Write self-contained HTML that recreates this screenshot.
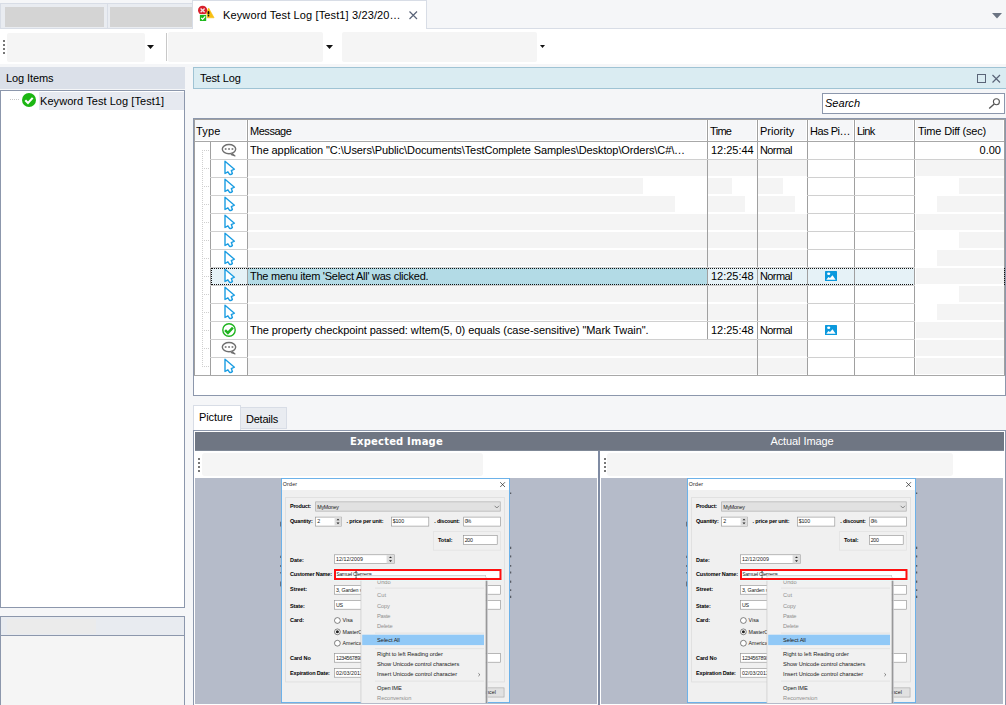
<!DOCTYPE html><html><head><meta charset="utf-8"><title>Keyword Test Log</title><style>
*{box-sizing:border-box;margin:0;padding:0}
html,body{width:1006px;height:705px;overflow:hidden;background:#f5f6f8;font-family:"Liberation Sans",sans-serif;font-size:11px;color:#000}
.a{position:absolute}
.t{position:absolute;white-space:pre;line-height:14px;height:14px}
.blur{position:absolute;background:#f5f5f5;border-radius:2px}
.dt{font-family:"Liberation Sans",sans-serif;fill:#1a1a1a;white-space:pre}
.dt.b{font-weight:bold;fill:#000}
.dt.g{fill:#8f8f8f}
.dlg{position:absolute;overflow:hidden}
.dlg .a{position:absolute}
svg{position:absolute;overflow:visible}
</style></head><body>
<div class="a" style="left:0px;top:3px;width:108px;height:26px;background:#e9ecf1;border:1px solid #d8dde6;"></div>
<div class="a" style="left:108px;top:3px;width:85px;height:26px;background:#e9ecf1;border:1px solid #d8dde6;border-left:none;"></div>
<div class="a" style="left:5px;top:7px;width:99px;height:20px;background:#d4d4d4;"></div>
<div class="a" style="left:110px;top:7px;width:82px;height:20px;background:#d4d4d4;"></div>
<div class="a" style="left:0px;top:28px;width:1006px;height:1px;background:#d8dde6;"></div>
<div class="a" style="left:192px;top:0px;width:235px;height:29px;background:#ffffff;border:1px solid #d8dde6;border-bottom:none;"></div>
<div class="t" style="left:223px;top:8px;"><span id="f0" style="letter-spacing:0.129px">Keyword Test Log [Test1] 3/23/20…</span></div>
<svg style="left:197px;top:4px" width="18" height="19" viewBox="0 0 18 19">
<path d="M11.6 4 L17.1 13.8 L7.4 13.8 Z" fill="#f8c012" stroke="#f8c012" stroke-width="0.6" stroke-linejoin="round"/>
<rect x="10.6" y="7.1" width="1.8" height="3.4" rx="0.8" fill="#111"/><rect x="10.6" y="10.9" width="1.8" height="1.6" rx="0.8" fill="#111"/>
<circle cx="5.6" cy="6.3" r="4.6" fill="#d8202c"/>
<path d="M3.6 4.4 L7.6 8.2 M7.6 4.4 L3.6 8.2" stroke="#f3dfe0" stroke-width="1.4"/>
<rect x="2.2" y="10.1" width="7.6" height="7.6" fill="#fff"/>
<rect x="2.9" y="10.9" width="6.3" height="6.1" fill="#1db81d"/>
<path d="M4.2 13.9 L5.6 15.4 L8.2 12.4" stroke="#fff" stroke-width="1.2" fill="none"/>
</svg>
<svg style="left:409px;top:11px" width="9" height="9" viewBox="0 0 9 9"><path d="M0.5 0.5 L8 8 M8 0.5 L0.5 8" stroke="#5a6478" stroke-width="1.2" fill="none"/></svg>
<svg style="left:992px;top:13px" width="10" height="6" viewBox="0 0 10 6"><path d="M0 0 L10 0 L5 5.5 Z" fill="#6b7483"/></svg>
<div class="a" style="left:0px;top:29px;width:1006px;height:35px;background:#ffffff;"></div>
<div class="a" style="left:3px;top:40px;width:2px;height:2px;background:#777;"></div>
<div class="a" style="left:3px;top:44px;width:2px;height:2px;background:#777;"></div>
<div class="a" style="left:3px;top:48px;width:2px;height:2px;background:#777;"></div>
<div class="a" style="left:3px;top:52px;width:2px;height:2px;background:#777;"></div>
<div class="blur" style="left:7px;top:33px;width:138px;height:29px;"></div>
<div class="a" style="left:166px;top:33px;width:1px;height:28px;background:#c8c8c8;"></div>
<div class="blur" style="left:168px;top:32px;width:155px;height:30px;"></div>
<div class="blur" style="left:342px;top:32px;width:195px;height:30px;"></div>
<svg style="left:147px;top:45px" width="7" height="4" viewBox="0 0 7 4"><path d="M0 0 L7 0 L3.5 4 Z" fill="#111"/></svg>
<svg style="left:326px;top:45px" width="7" height="4" viewBox="0 0 7 4"><path d="M0 0 L7 0 L3.5 4 Z" fill="#111"/></svg>
<svg style="left:540px;top:45px" width="5" height="3" viewBox="0 0 5 3"><path d="M0 0 L5 0 L2.5 3 Z" fill="#111"/></svg>
<div class="a" style="left:0px;top:67px;width:185px;height:22px;background:#dbe0e9;"></div>
<div class="t" style="left:6px;top:71px;"><span id="f1" style="letter-spacing:-0.089px">Log Items</span></div>
<div class="a" style="left:0px;top:90px;width:185px;height:518px;background:#ffffff;border:1px solid #8c97ac;"></div>
<div class="a" style="left:39px;top:92px;width:145px;height:18px;background:#e6e9f0;"></div>
<div class="a" style="left:10px;top:99px;width:10px;height:1px;background:repeating-linear-gradient(90deg,#c8c8c8 0 1px,transparent 1px 2px);"></div>
<svg style="left:22px;top:93px" width="14" height="14" viewBox="0 0 14 14"><circle cx="7" cy="7" r="7" fill="#1cb613"/><path d="M3.3 7.2 L6 9.9 L10.7 4.9" stroke="#fff" stroke-width="2.1" fill="none"/></svg>
<div class="t" style="left:40px;top:94px;"><span id="f2" style="letter-spacing:0.061px">Keyword Test Log [Test1]</span></div>
<div class="a" style="left:0px;top:616px;width:185px;height:100px;background:#f5f5f5;border:1px solid #8c97ac;"></div>
<div class="a" style="left:1px;top:617px;width:183px;height:18px;background:#e8ebf0;"></div>
<div class="a" style="left:7px;top:619px;width:89px;height:15px;background:#ebebeb;"></div>
<div class="a" style="left:1px;top:635px;width:183px;height:1px;background:#8c97ac;"></div>
<div class="a" style="left:193px;top:67px;width:820px;height:22px;background:#daecf2;border:1px solid #9fc3d4;"></div>
<div class="t" style="left:200px;top:71px;"><span id="f3" style="letter-spacing:-0.099px">Test Log</span></div>
<svg style="left:977px;top:74px" width="9" height="9" viewBox="0 0 9 9"><rect x="0.5" y="0.5" width="8" height="8" fill="none" stroke="#5a6478" stroke-width="1"/></svg>
<svg style="left:992px;top:74px" width="9" height="9" viewBox="0 0 9 9"><path d="M0.5 1 L8 8.5 M8 1 L0.5 8.5" stroke="#5a6478" stroke-width="1.2" fill="none"/></svg>
<div class="a" style="left:822px;top:93px;width:183px;height:21px;background:#ffffff;border:1px solid #8c97ac;"></div>
<div class="t" style="left:825px;top:96px;font-style:italic;"><span id="f4" style="letter-spacing:0.028px">Search</span></div>
<svg style="left:988px;top:97px" width="13" height="13" viewBox="0 0 13 13"><circle cx="8.4" cy="4.7" r="3" fill="none" stroke="#555" stroke-width="1.1"/><path d="M6.2 6.9 L1.2 11.4" stroke="#555" stroke-width="1.4"/></svg>
<div class="a" style="left:193px;top:118px;width:813px;height:278px;background:#ffffff;border:1px solid #8c97ac;"></div>
<div class="a" style="left:194px;top:119px;width:811px;height:1px;background:#a0a0a0;"></div>
<div class="a" style="left:194px;top:119px;width:1px;height:257px;background:#a0a0a0;"></div>
<div class="a" style="left:1004px;top:119px;width:1px;height:257px;background:#a0a0a0;"></div>
<div class="a" style="left:195px;top:120px;width:809px;height:21px;background:#f5f6f8;"></div>
<div class="a" style="left:1003px;top:120px;width:1px;height:21px;background:#ffffff;"></div>
<div class="a" style="left:211px;top:268px;width:36px;height:17px;background:#e6f2f7;"></div>
<div class="a" style="left:248px;top:268px;width:459px;height:17px;background:#b3dbe6;"></div>
<div class="a" style="left:708px;top:268px;width:206px;height:17px;background:#e6f2f7;"></div>
<div class="a" style="left:210px;top:142px;width:1px;height:234px;background:#a0a0a0;"></div>
<div class="a" style="left:247px;top:120px;width:1px;height:256px;background:#a0a0a0;"></div>
<div class="a" style="left:246px;top:120px;width:1px;height:21px;background:#ffffff;"></div>
<div class="a" style="left:248px;top:120px;width:1px;height:21px;background:#ffffff;"></div>
<div class="a" style="left:707px;top:120px;width:1px;height:256px;background:#a0a0a0;"></div>
<div class="a" style="left:706px;top:120px;width:1px;height:21px;background:#ffffff;"></div>
<div class="a" style="left:708px;top:120px;width:1px;height:21px;background:#ffffff;"></div>
<div class="a" style="left:757px;top:120px;width:1px;height:256px;background:#a0a0a0;"></div>
<div class="a" style="left:756px;top:120px;width:1px;height:21px;background:#ffffff;"></div>
<div class="a" style="left:758px;top:120px;width:1px;height:21px;background:#ffffff;"></div>
<div class="a" style="left:807px;top:120px;width:1px;height:256px;background:#a0a0a0;"></div>
<div class="a" style="left:806px;top:120px;width:1px;height:21px;background:#ffffff;"></div>
<div class="a" style="left:808px;top:120px;width:1px;height:21px;background:#ffffff;"></div>
<div class="a" style="left:854px;top:120px;width:1px;height:256px;background:#a0a0a0;"></div>
<div class="a" style="left:853px;top:120px;width:1px;height:21px;background:#ffffff;"></div>
<div class="a" style="left:855px;top:120px;width:1px;height:21px;background:#ffffff;"></div>
<div class="a" style="left:914px;top:120px;width:1px;height:256px;background:#a0a0a0;"></div>
<div class="a" style="left:913px;top:120px;width:1px;height:21px;background:#ffffff;"></div>
<div class="a" style="left:915px;top:120px;width:1px;height:21px;background:#ffffff;"></div>
<div class="a" style="left:195px;top:140px;width:809px;height:1px;background:#ffffff;"></div>
<div class="a" style="left:247px;top:140px;width:1px;height:1px;background:#a0a0a0;"></div>
<div class="a" style="left:707px;top:140px;width:1px;height:1px;background:#a0a0a0;"></div>
<div class="a" style="left:757px;top:140px;width:1px;height:1px;background:#a0a0a0;"></div>
<div class="a" style="left:807px;top:140px;width:1px;height:1px;background:#a0a0a0;"></div>
<div class="a" style="left:854px;top:140px;width:1px;height:1px;background:#a0a0a0;"></div>
<div class="a" style="left:914px;top:140px;width:1px;height:1px;background:#a0a0a0;"></div>
<div class="a" style="left:195px;top:141px;width:809px;height:1px;background:#a8a8a8;"></div>
<div class="a" style="left:210px;top:159px;width:794px;height:1px;background:#d0d0d0;"></div>
<div class="a" style="left:210px;top:177px;width:794px;height:1px;background:#d0d0d0;"></div>
<div class="a" style="left:210px;top:195px;width:794px;height:1px;background:#d0d0d0;"></div>
<div class="a" style="left:210px;top:213px;width:794px;height:1px;background:#d0d0d0;"></div>
<div class="a" style="left:210px;top:231px;width:794px;height:1px;background:#d0d0d0;"></div>
<div class="a" style="left:210px;top:249px;width:794px;height:1px;background:#d0d0d0;"></div>
<div class="a" style="left:210px;top:267px;width:794px;height:1px;background:#d0d0d0;"></div>
<div class="a" style="left:210px;top:285px;width:794px;height:1px;background:#d0d0d0;"></div>
<div class="a" style="left:210px;top:303px;width:794px;height:1px;background:#d0d0d0;"></div>
<div class="a" style="left:210px;top:321px;width:794px;height:1px;background:#d0d0d0;"></div>
<div class="a" style="left:210px;top:339px;width:794px;height:1px;background:#d0d0d0;"></div>
<div class="a" style="left:210px;top:357px;width:794px;height:1px;background:#d0d0d0;"></div>
<div class="a" style="left:210px;top:375px;width:794px;height:1px;background:#d0d0d0;"></div>
<div class="a" style="left:194px;top:375px;width:811px;height:1px;background:#a8a8a8;"></div>
<div class="t" style="left:196px;top:124px;"><span id="f5" style="letter-spacing:0.214px">Type</span></div>
<div class="t" style="left:250px;top:124px;"><span id="f6" style="letter-spacing:-0.457px">Message</span></div>
<div class="t" style="left:710px;top:124px;"><span id="f7" style="letter-spacing:-0.682px">Time</span></div>
<div class="t" style="left:760px;top:124px;"><span id="f8" style="letter-spacing:0.009px">Priority</span></div>
<div class="t" style="left:810px;top:124px;"><span id="f9" style="letter-spacing:-0.468px">Has Pi…</span></div>
<div class="t" style="left:857px;top:124px;"><span id="f10" style="letter-spacing:-0.663px">Link</span></div>
<div class="t" style="left:918px;top:124px;"><span id="f11" style="letter-spacing:-0.193px">Time Diff (sec)</span></div>
<div class="a" style="left:202px;top:150px;width:1px;height:218px;background:repeating-linear-gradient(180deg,#cfcfcf 0 1px,transparent 1px 2px);"></div>
<div class="a" style="left:202px;top:150px;width:8px;height:1px;background:repeating-linear-gradient(90deg,#cfcfcf 0 1px,transparent 1px 2px);"></div>
<div class="a" style="left:202px;top:168px;width:8px;height:1px;background:repeating-linear-gradient(90deg,#cfcfcf 0 1px,transparent 1px 2px);"></div>
<div class="a" style="left:202px;top:186px;width:8px;height:1px;background:repeating-linear-gradient(90deg,#cfcfcf 0 1px,transparent 1px 2px);"></div>
<div class="a" style="left:202px;top:204px;width:8px;height:1px;background:repeating-linear-gradient(90deg,#cfcfcf 0 1px,transparent 1px 2px);"></div>
<div class="a" style="left:202px;top:222px;width:8px;height:1px;background:repeating-linear-gradient(90deg,#cfcfcf 0 1px,transparent 1px 2px);"></div>
<div class="a" style="left:202px;top:240px;width:8px;height:1px;background:repeating-linear-gradient(90deg,#cfcfcf 0 1px,transparent 1px 2px);"></div>
<div class="a" style="left:202px;top:258px;width:8px;height:1px;background:repeating-linear-gradient(90deg,#cfcfcf 0 1px,transparent 1px 2px);"></div>
<div class="a" style="left:202px;top:276px;width:8px;height:1px;background:repeating-linear-gradient(90deg,#cfcfcf 0 1px,transparent 1px 2px);"></div>
<div class="a" style="left:202px;top:294px;width:8px;height:1px;background:repeating-linear-gradient(90deg,#cfcfcf 0 1px,transparent 1px 2px);"></div>
<div class="a" style="left:202px;top:312px;width:8px;height:1px;background:repeating-linear-gradient(90deg,#cfcfcf 0 1px,transparent 1px 2px);"></div>
<div class="a" style="left:202px;top:330px;width:8px;height:1px;background:repeating-linear-gradient(90deg,#cfcfcf 0 1px,transparent 1px 2px);"></div>
<div class="a" style="left:202px;top:348px;width:8px;height:1px;background:repeating-linear-gradient(90deg,#cfcfcf 0 1px,transparent 1px 2px);"></div>
<div class="a" style="left:202px;top:366px;width:8px;height:1px;background:repeating-linear-gradient(90deg,#cfcfcf 0 1px,transparent 1px 2px);"></div>
<div class="t" style="left:250px;top:143px;width:456px;overflow:hidden;"><span id="f12" style="letter-spacing:-0.102px">The application "C:\Users\Public\Documents\TestComplete Samples\Desktop\Orders\C#\…</span></div>
<div class="t" style="left:711px;top:143px;"><span id="f13" style="letter-spacing:-0.018px">12:25:44</span></div>
<div class="t" style="left:760px;top:143px;"><span id="f14" style="letter-spacing:-0.611px">Normal</span></div>
<div class="t" style="left:940px;top:143px;width:61px;text-align:right;">0.00</div>
<div class="t" style="left:250px;top:269px;width:456px;overflow:hidden;"><span id="f15" style="letter-spacing:-0.254px">The menu item 'Select All' was clicked.</span></div>
<div class="t" style="left:711px;top:269px;"><span id="f16" style="letter-spacing:-0.018px">12:25:48</span></div>
<div class="t" style="left:760px;top:269px;"><span id="f17" style="letter-spacing:-0.611px">Normal</span></div>
<div class="t" style="left:250px;top:323px;width:456px;overflow:hidden;"><span id="f18" style="letter-spacing:-0.057px">The property checkpoint passed: wItem(5, 0) equals (case-sensitive) "Mark Twain".</span></div>
<div class="t" style="left:711px;top:323px;"><span id="f19" style="letter-spacing:-0.018px">12:25:48</span></div>
<div class="t" style="left:760px;top:323px;"><span id="f20" style="letter-spacing:-0.611px">Normal</span></div>
<div class="a" style="left:248px;top:177px;width:559px;height:1px;background:#ffffff;"></div>
<div class="a" style="left:248px;top:195px;width:559px;height:1px;background:#ffffff;"></div>
<div class="a" style="left:248px;top:213px;width:559px;height:1px;background:#ffffff;"></div>
<div class="a" style="left:248px;top:231px;width:559px;height:1px;background:#ffffff;"></div>
<div class="a" style="left:248px;top:249px;width:559px;height:1px;background:#ffffff;"></div>
<div class="a" style="left:248px;top:303px;width:559px;height:1px;background:#ffffff;"></div>
<div class="a" style="left:248px;top:357px;width:559px;height:1px;background:#ffffff;"></div>
<div class="a" style="left:915px;top:177px;width:89px;height:1px;background:#ffffff;"></div>
<div class="a" style="left:915px;top:195px;width:89px;height:1px;background:#ffffff;"></div>
<div class="a" style="left:915px;top:213px;width:89px;height:1px;background:#ffffff;"></div>
<div class="a" style="left:915px;top:231px;width:89px;height:1px;background:#ffffff;"></div>
<div class="a" style="left:915px;top:249px;width:89px;height:1px;background:#ffffff;"></div>
<div class="a" style="left:915px;top:267px;width:89px;height:1px;background:#ffffff;"></div>
<div class="a" style="left:915px;top:285px;width:89px;height:1px;background:#ffffff;"></div>
<div class="a" style="left:915px;top:303px;width:89px;height:1px;background:#ffffff;"></div>
<div class="a" style="left:915px;top:321px;width:89px;height:1px;background:#ffffff;"></div>
<div class="a" style="left:915px;top:339px;width:89px;height:1px;background:#ffffff;"></div>
<div class="a" style="left:915px;top:357px;width:89px;height:1px;background:#ffffff;"></div>
<div class="a" style="left:707px;top:160px;width:1px;height:106px;background:#a0a0a0;"></div>
<div class="a" style="left:707px;top:286px;width:1px;height:35px;background:#a0a0a0;"></div>
<div class="a" style="left:757px;top:160px;width:1px;height:106px;background:#a0a0a0;"></div>
<div class="a" style="left:757px;top:286px;width:1px;height:35px;background:#a0a0a0;"></div>
<div class="a" style="left:757px;top:340px;width:1px;height:35px;background:#a0a0a0;"></div>
<div class="a" style="left:707px;top:340px;width:1px;height:35px;background:#ffffff;"></div>
<div class="a" style="left:248px;top:160px;width:459px;height:16px;background:#f4f4f4;"></div>
<div class="a" style="left:708px;top:160px;width:49px;height:16px;background:#f4f4f4;"></div>
<div class="a" style="left:758px;top:160px;width:49px;height:16px;background:#f4f4f4;"></div>
<div class="a" style="left:916px;top:160px;width:88px;height:16px;background:#f4f4f4;"></div>
<div class="a" style="left:248px;top:178px;width:395px;height:16px;background:#f4f4f4;"></div>
<div class="a" style="left:708px;top:178px;width:24px;height:16px;background:#f4f4f4;"></div>
<div class="a" style="left:758px;top:178px;width:25px;height:16px;background:#f4f4f4;"></div>
<div class="a" style="left:959px;top:178px;width:45px;height:16px;background:#f4f4f4;"></div>
<div class="a" style="left:248px;top:196px;width:427px;height:16px;background:#f4f4f4;"></div>
<div class="a" style="left:708px;top:196px;width:37px;height:16px;background:#f4f4f4;"></div>
<div class="a" style="left:758px;top:196px;width:37px;height:16px;background:#f4f4f4;"></div>
<div class="a" style="left:937px;top:196px;width:67px;height:16px;background:#f4f4f4;"></div>
<div class="a" style="left:248px;top:214px;width:459px;height:16px;background:#f4f4f4;"></div>
<div class="a" style="left:708px;top:214px;width:49px;height:16px;background:#f4f4f4;"></div>
<div class="a" style="left:758px;top:214px;width:49px;height:16px;background:#f4f4f4;"></div>
<div class="a" style="left:916px;top:214px;width:88px;height:16px;background:#f4f4f4;"></div>
<div class="a" style="left:248px;top:232px;width:459px;height:16px;background:#f4f4f4;"></div>
<div class="a" style="left:708px;top:232px;width:49px;height:16px;background:#f4f4f4;"></div>
<div class="a" style="left:758px;top:232px;width:49px;height:16px;background:#f4f4f4;"></div>
<div class="a" style="left:959px;top:232px;width:45px;height:16px;background:#f4f4f4;"></div>
<div class="a" style="left:248px;top:250px;width:459px;height:16px;background:#f4f4f4;"></div>
<div class="a" style="left:708px;top:250px;width:49px;height:16px;background:#f4f4f4;"></div>
<div class="a" style="left:758px;top:250px;width:49px;height:16px;background:#f4f4f4;"></div>
<div class="a" style="left:937px;top:250px;width:67px;height:16px;background:#f4f4f4;"></div>
<div class="a" style="left:916px;top:268px;width:88px;height:16px;background:#f4f4f4;"></div>
<div class="a" style="left:248px;top:286px;width:459px;height:16px;background:#f4f4f4;"></div>
<div class="a" style="left:708px;top:286px;width:49px;height:16px;background:#f4f4f4;"></div>
<div class="a" style="left:758px;top:286px;width:49px;height:16px;background:#f4f4f4;"></div>
<div class="a" style="left:959px;top:286px;width:45px;height:16px;background:#f4f4f4;"></div>
<div class="a" style="left:248px;top:304px;width:459px;height:16px;background:#f4f4f4;"></div>
<div class="a" style="left:708px;top:304px;width:49px;height:16px;background:#f4f4f4;"></div>
<div class="a" style="left:758px;top:304px;width:49px;height:16px;background:#f4f4f4;"></div>
<div class="a" style="left:937px;top:304px;width:67px;height:16px;background:#f4f4f4;"></div>
<div class="a" style="left:916px;top:322px;width:88px;height:16px;background:#f4f4f4;"></div>
<div class="a" style="left:248px;top:340px;width:509px;height:16px;background:#f4f4f4;"></div>
<div class="a" style="left:758px;top:340px;width:49px;height:16px;background:#f4f4f4;"></div>
<div class="a" style="left:916px;top:340px;width:88px;height:16px;background:#f4f4f4;"></div>
<div class="a" style="left:248px;top:358px;width:509px;height:16px;background:#f4f4f4;"></div>
<div class="a" style="left:758px;top:358px;width:49px;height:16px;background:#f4f4f4;"></div>
<div class="a" style="left:916px;top:358px;width:88px;height:16px;background:#f4f4f4;"></div>
<svg style="left:222px;top:144px" width="15" height="14" viewBox="0 0 15 14"><ellipse cx="7" cy="5.1" rx="6.7" ry="4.6" fill="#fff" stroke="#707070" stroke-width="1.4"/><path d="M9.4 9 L13 11.9 L8.8 10.4" fill="#fff" stroke="#707070" stroke-width="1.2" stroke-linejoin="round"/><rect x="2.8" y="4.2" width="1.7" height="1.6" fill="#707070"/><rect x="6.2" y="4.2" width="1.7" height="1.6" fill="#707070"/><rect x="9.6" y="4.2" width="1.7" height="1.6" fill="#707070"/></svg>
<svg style="left:223px;top:160px" width="13" height="16" viewBox="0 0 13 16"><path d="M2 1.3 L2 13.5 L4.9 11.8 L6.6 14.3 Q8 15 9.4 13.5 L8.3 10.6 L11.4 9.2 Z" fill="#fff" stroke="#1b9de2" stroke-width="1.4" stroke-linejoin="round"/></svg>
<svg style="left:223px;top:178px" width="13" height="16" viewBox="0 0 13 16"><path d="M2 1.3 L2 13.5 L4.9 11.8 L6.6 14.3 Q8 15 9.4 13.5 L8.3 10.6 L11.4 9.2 Z" fill="#fff" stroke="#1b9de2" stroke-width="1.4" stroke-linejoin="round"/></svg>
<svg style="left:223px;top:196px" width="13" height="16" viewBox="0 0 13 16"><path d="M2 1.3 L2 13.5 L4.9 11.8 L6.6 14.3 Q8 15 9.4 13.5 L8.3 10.6 L11.4 9.2 Z" fill="#fff" stroke="#1b9de2" stroke-width="1.4" stroke-linejoin="round"/></svg>
<svg style="left:223px;top:214px" width="13" height="16" viewBox="0 0 13 16"><path d="M2 1.3 L2 13.5 L4.9 11.8 L6.6 14.3 Q8 15 9.4 13.5 L8.3 10.6 L11.4 9.2 Z" fill="#fff" stroke="#1b9de2" stroke-width="1.4" stroke-linejoin="round"/></svg>
<svg style="left:223px;top:232px" width="13" height="16" viewBox="0 0 13 16"><path d="M2 1.3 L2 13.5 L4.9 11.8 L6.6 14.3 Q8 15 9.4 13.5 L8.3 10.6 L11.4 9.2 Z" fill="#fff" stroke="#1b9de2" stroke-width="1.4" stroke-linejoin="round"/></svg>
<svg style="left:223px;top:250px" width="13" height="16" viewBox="0 0 13 16"><path d="M2 1.3 L2 13.5 L4.9 11.8 L6.6 14.3 Q8 15 9.4 13.5 L8.3 10.6 L11.4 9.2 Z" fill="#fff" stroke="#1b9de2" stroke-width="1.4" stroke-linejoin="round"/></svg>
<svg style="left:223px;top:268px" width="13" height="16" viewBox="0 0 13 16"><path d="M2 1.3 L2 13.5 L4.9 11.8 L6.6 14.3 Q8 15 9.4 13.5 L8.3 10.6 L11.4 9.2 Z" fill="#fff" stroke="#1b9de2" stroke-width="1.4" stroke-linejoin="round"/></svg>
<svg style="left:223px;top:286px" width="13" height="16" viewBox="0 0 13 16"><path d="M2 1.3 L2 13.5 L4.9 11.8 L6.6 14.3 Q8 15 9.4 13.5 L8.3 10.6 L11.4 9.2 Z" fill="#fff" stroke="#1b9de2" stroke-width="1.4" stroke-linejoin="round"/></svg>
<svg style="left:223px;top:304px" width="13" height="16" viewBox="0 0 13 16"><path d="M2 1.3 L2 13.5 L4.9 11.8 L6.6 14.3 Q8 15 9.4 13.5 L8.3 10.6 L11.4 9.2 Z" fill="#fff" stroke="#1b9de2" stroke-width="1.4" stroke-linejoin="round"/></svg>
<svg style="left:222px;top:323px" width="14" height="14" viewBox="0 0 14 14"><circle cx="7" cy="7" r="6.2" fill="#fff" stroke="#1fb41f" stroke-width="1.4"/><path d="M3.1 7.1 L5.9 9.9 L10.9 4.7" stroke="#1fb41f" stroke-width="2.5" fill="none"/></svg>
<svg style="left:222px;top:342px" width="15" height="14" viewBox="0 0 15 14"><ellipse cx="7" cy="5.1" rx="6.7" ry="4.6" fill="#fff" stroke="#707070" stroke-width="1.4"/><path d="M9.4 9 L13 11.9 L8.8 10.4" fill="#fff" stroke="#707070" stroke-width="1.2" stroke-linejoin="round"/><rect x="2.8" y="4.2" width="1.7" height="1.6" fill="#707070"/><rect x="6.2" y="4.2" width="1.7" height="1.6" fill="#707070"/><rect x="9.6" y="4.2" width="1.7" height="1.6" fill="#707070"/></svg>
<svg style="left:223px;top:358px" width="13" height="16" viewBox="0 0 13 16"><path d="M2 1.3 L2 13.5 L4.9 11.8 L6.6 14.3 Q8 15 9.4 13.5 L8.3 10.6 L11.4 9.2 Z" fill="#fff" stroke="#1b9de2" stroke-width="1.4" stroke-linejoin="round"/></svg>
<svg style="left:825px;top:271px" width="12" height="10" viewBox="0 0 12 10"><rect x="0" y="0" width="12" height="10" rx="0.6" fill="#0c99dd"/><ellipse cx="3.7" cy="2.8" rx="1.6" ry="1.2" fill="#fff"/><path d="M1.3 8.7 L3.4 5.9 L5 7 L7.5 4.2 L10.6 8.7 Z" fill="#fff"/></svg>
<svg style="left:825px;top:325px" width="12" height="10" viewBox="0 0 12 10"><rect x="0" y="0" width="12" height="10" rx="0.6" fill="#0c99dd"/><ellipse cx="3.7" cy="2.8" rx="1.6" ry="1.2" fill="#fff"/><path d="M1.3 8.7 L3.4 5.9 L5 7 L7.5 4.2 L10.6 8.7 Z" fill="#fff"/></svg>
<div class="a" style="left:211px;top:268px;width:703px;height:1px;background:repeating-linear-gradient(90deg,transparent 0 1px,#111 1px 2px);"></div>
<div class="a" style="left:211px;top:284px;width:703px;height:1px;background:repeating-linear-gradient(90deg,transparent 0 1px,#111 1px 2px);"></div>
<div class="a" style="left:211px;top:268px;width:1px;height:17px;background:repeating-linear-gradient(180deg,#111 0 1px,transparent 1px 2px);"></div>
<div class="a" style="left:1004px;top:268px;width:1px;height:17px;background:repeating-linear-gradient(180deg,#111 0 1px,transparent 1px 2px);"></div>
<div class="a" style="left:240px;top:407px;width:47px;height:22px;background:#e9ecf1;border:1px solid #d8dde6;"></div>
<div class="t" style="left:246px;top:412px;"><span id="f21" style="letter-spacing:-0.221px">Details</span></div>
<div class="a" style="left:193px;top:430px;width:813px;height:280px;background:#ffffff;border:1px solid #8c97ac;"></div>
<div class="a" style="left:193px;top:405px;width:48px;height:25px;background:#ffffff;border:1px solid #d8dde6;border-bottom:none;"></div>
<div class="t" style="left:199px;top:410px;"><span id="f22" style="letter-spacing:-0.108px">Picture</span></div>
<div class="a" style="left:195px;top:432px;width:809px;height:19px;background:#6f7683;"></div>
<div class="a" style="left:195px;top:450px;width:809px;height:1px;background:#7f8896;"></div>
<div class="a" style="left:598px;top:451px;width:2px;height:254px;background:#7f8ba3;"></div>
<div class="t" style="left:195px;top:435px;width:403px;color:#fff;text-align:center;font-weight:bold;font-family:DejaVu Sans,Liberation Sans,sans-serif;font-size:10px;"><span id="f23" style="letter-spacing:0.186px">Expected Image</span></div>
<div class="a" style="left:195px;top:478px;width:402px;height:226px;background:#b5bbc9;"></div>
<div class="blur" style="left:202px;top:453px;width:281px;height:23px;border-radius:3px;"></div>
<div class="a" style="left:198px;top:458px;width:2px;height:2px;background:#777;"></div>
<div class="a" style="left:198px;top:462px;width:2px;height:2px;background:#777;"></div>
<div class="a" style="left:198px;top:466px;width:2px;height:2px;background:#777;"></div>
<div class="a" style="left:198px;top:470px;width:2px;height:2px;background:#777;"></div>
<div class="t" style="left:600px;top:434px;width:404px;color:#fff;text-align:center;"><span id="f24" style="letter-spacing:-0.091px">Actual Image</span></div>
<div class="a" style="left:601px;top:478px;width:402px;height:226px;background:#b5bbc9;"></div>
<div class="blur" style="left:607px;top:453px;width:346px;height:23px;border-radius:3px;"></div>
<div class="a" style="left:604px;top:458px;width:2px;height:2px;background:#777;"></div>
<div class="a" style="left:604px;top:462px;width:2px;height:2px;background:#777;"></div>
<div class="a" style="left:604px;top:466px;width:2px;height:2px;background:#777;"></div>
<div class="a" style="left:604px;top:470px;width:2px;height:2px;background:#777;"></div>
<svg style="left:279px;top:478px;overflow:hidden" width="242" height="225" viewBox="-2 0 242 225"><rect x="0.45" y="0.45" width="228.10" height="224.10" fill="#f0f0f0" stroke="#62adea" stroke-width="0.9" /><rect x="1" y="1" width="227" height="11" fill="#ffffff" /><text class="dt " x="1.8" y="7.91" font-size="5.3" textLength="14.3" lengthAdjust="spacing">Order</text><path d="M219.2 4.2 L224 9 M224 4.2 L219.2 9" fill="none" stroke="#222" stroke-width="0.7"/><rect x="4.65" y="19.35" width="218.80" height="184.60" fill="none" stroke="#dadada" stroke-width="0.7" /><text class="dt b" x="9" y="30.08" font-size="5.5" textLength="21.1" lengthAdjust="spacing">Product:</text><rect x="34.65" y="23.85" width="184.60" height="9.30" fill="#e1e1e1" stroke="#adadad" stroke-width="0.7" /><text class="dt " x="36.2" y="30.81" font-size="5.3" fill="#3a3a3a" textLength="21.7" lengthAdjust="spacing">MyMoney</text><path d="M213.6 27.8 L215.8 30 L218 27.8" fill="none" stroke="#444" stroke-width="0.6"/><text class="dt b" x="9" y="45.18" font-size="5.5" textLength="22.8" lengthAdjust="spacing">Quantity:</text><rect x="34.60" y="39.10" width="26.00" height="9.00" fill="#fff" stroke="#8e8e8e" stroke-width="0.6" /><text class="dt " x="36.2" y="44.81" font-size="5.3">2</text><rect x="53.6" y="39.4" width="6.7" height="8.4" fill="#dddddd" /><path d="M55.5 42.3 L57 40.8 L58.5 42.3 Z M55.5 44.5 L57 46.2 L58.5 44.5 Z" fill="#222"/><text class="dt b" x="65.6" y="45.18" font-size="5.5" textLength="37" lengthAdjust="spacing">. price per unit:</text><rect x="110.60" y="39.10" width="37.20" height="9.00" fill="#fff" stroke="#8e8e8e" stroke-width="0.6" /><text class="dt " x="111.8" y="45.01" font-size="5.3" textLength="11.3" lengthAdjust="spacing">$100</text><text class="dt b" x="153.3" y="45.18" font-size="5.5" textLength="25.6" lengthAdjust="spacing">. discount:</text><rect x="182.70" y="39.10" width="36.70" height="9.00" fill="#fff" stroke="#8e8e8e" stroke-width="0.6" /><text class="dt " x="183.8" y="45.01" font-size="5.3" fill="#666" textLength="6.4" lengthAdjust="spacing">0%</text><rect x="152.55" y="53.65" width="66.80" height="18.50" fill="none" stroke="#e0e0e0" stroke-width="0.7" /><text class="dt b" x="156.9" y="63.68" font-size="5.5" textLength="14.7" lengthAdjust="spacing">Total:</text><rect x="182.60" y="57.50" width="33.60" height="9.00" fill="#fff" stroke="#8e8e8e" stroke-width="0.6" /><text class="dt " x="183.7" y="64.01" font-size="5.3" textLength="8.2" lengthAdjust="spacing">200</text><text class="dt b" x="9" y="83.68" font-size="5.5" textLength="13.9" lengthAdjust="spacing">Date:</text><rect x="53.40" y="76.80" width="60.20" height="8.80" fill="#fff" stroke="#8e8e8e" stroke-width="0.6" /><text class="dt " x="55" y="82.61" font-size="5.3" textLength="26.9" lengthAdjust="spacing">12/12/2009</text><rect x="105.6" y="77.1" width="7.6" height="8.2" fill="#dddddd" /><path d="M108 80 L109.5 78.5 L111 80 Z M108 82.2 L109.5 83.9 L111 82.2 Z" fill="#222"/><text class="dt b" x="9" y="97.58" font-size="5.5" textLength="42" lengthAdjust="spacing">Customer Name:</text><rect x="53" y="91" width="167.5" height="11" fill="#fff" /><text class="dt " x="55" y="97.91" font-size="5.3" textLength="36" lengthAdjust="spacing">Samuel Clemens</text><text class="dt b" x="9" y="113.48" font-size="5.5" textLength="17.2" lengthAdjust="spacing">Street:</text><rect x="53.40" y="107.50" width="166.00" height="8.70" fill="#fff" stroke="#8e8e8e" stroke-width="0.6" /><text class="dt " x="55" y="113.91" font-size="5.3" textLength="29" lengthAdjust="spacing">3, Garden st.</text><text class="dt b" x="9" y="129.98" font-size="5.5" textLength="14.8" lengthAdjust="spacing">State:</text><rect x="53.40" y="122.50" width="166.00" height="8.70" fill="#fff" stroke="#8e8e8e" stroke-width="0.6" /><text class="dt " x="55" y="128.61" font-size="5.3" textLength="7" lengthAdjust="spacing">US</text><text class="dt b" x="9" y="144.48" font-size="5.5" textLength="14" lengthAdjust="spacing">Card:</text><circle cx="56.4" cy="142.50" r="2.9" fill="#fff" stroke="#333" stroke-width="0.6"/><text class="dt " x="61.6" y="144.31" font-size="5.3" textLength="10.1" lengthAdjust="spacing">Visa</text><circle cx="56.4" cy="153.85" r="2.9" fill="#fff" stroke="#333" stroke-width="0.6"/><circle cx="56.4" cy="153.85" r="1.5" fill="#222"/><text class="dt " x="61.6" y="155.96" font-size="5.3" textLength="27" lengthAdjust="spacing">MasterCard</text><circle cx="56.4" cy="165.20" r="2.9" fill="#fff" stroke="#333" stroke-width="0.6"/><text class="dt " x="61.6" y="166.91" font-size="5.3" textLength="42" lengthAdjust="spacing">American Express</text><text class="dt b" x="9" y="182.18" font-size="5.5" textLength="20.8" lengthAdjust="spacing">Card No</text><rect x="53.40" y="175.60" width="166.00" height="8.60" fill="#fff" stroke="#8e8e8e" stroke-width="0.6" /><text class="dt " x="55" y="182.01" font-size="5.3" textLength="32" lengthAdjust="spacing">123456789012</text><text class="dt b" x="9" y="197.08" font-size="5.5" textLength="39.9" lengthAdjust="spacing">Expiration Date:</text><rect x="53.40" y="190.60" width="60.20" height="8.60" fill="#fff" stroke="#8e8e8e" stroke-width="0.6" /><text class="dt " x="55" y="197.31" font-size="5.3" textLength="26.9" lengthAdjust="spacing">02/03/2012</text><rect x="146.35" y="209.85" width="36.70" height="9.20" fill="#e1e1e1" stroke="#adadad" stroke-width="0.7" /><text class="dt " x="160" y="215.81" font-size="5.3">OK</text><rect x="186.35" y="209.85" width="36.70" height="9.20" fill="#e1e1e1" stroke="#adadad" stroke-width="0.7" /><text class="dt " x="198" y="215.81" font-size="5.3" textLength="17" lengthAdjust="spacing">Cancel</text><rect x="204.8" y="99.5" width="1.1" height="128" fill="#8a8a8a" /><rect x="205.9" y="100" width="0.9" height="128" fill="#c4c4c8" /><rect x="79.95" y="97.35" width="124.70" height="132.30" fill="#f1f1f1" stroke="#c8c8c8" stroke-width="0.7" /><rect x="81.2" y="156.7" width="121.8" height="10.4" fill="#91c9f7" /><text class="dt m g" x="96.1" y="105.55" font-size="5.7" textLength="13.5" lengthAdjust="spacing">Undo</text><text class="dt m g" x="96.1" y="119.15" font-size="5.7" textLength="8.9" lengthAdjust="spacing">Cut</text><text class="dt m g" x="96.1" y="129.75" font-size="5.7" textLength="12.8" lengthAdjust="spacing">Copy</text><text class="dt m g" x="96.1" y="140.05" font-size="5.7" textLength="13.2" lengthAdjust="spacing">Paste</text><text class="dt m g" x="96.1" y="149.95" font-size="5.7" textLength="15.6" lengthAdjust="spacing">Delete</text><text class="dt m" x="96.1" y="177.75" font-size="5.7" textLength="65.8" lengthAdjust="spacing">Right to left Reading order</text><text class="dt m" x="96.1" y="188.15" font-size="5.7" textLength="82.2" lengthAdjust="spacing">Show Unicode control characters</text><text class="dt m" x="96.1" y="198.25" font-size="5.7" textLength="80" lengthAdjust="spacing">Insert Unicode control character</text><text class="dt m" x="96.1" y="212.25" font-size="5.7" textLength="24.6" lengthAdjust="spacing">Open IME</text><text class="dt m g" x="96.1" y="222.25" font-size="5.7" textLength="34.3" lengthAdjust="spacing">Reconversion</text><text class="dt m" x="96.1" y="163.85" font-size="5.7" fill="#000" textLength="22.7" lengthAdjust="spacing">Select All</text><path d="M197.4 195.3 L198.9 196.7 L197.4 198.1" fill="none" stroke="#333" stroke-width="0.6"/><rect x="94" y="109.7" width="109" height="0.7" fill="#dcdcdc" /><rect x="94" y="154.7" width="109" height="0.7" fill="#dcdcdc" /><rect x="94" y="170.39999999999998" width="109" height="0.7" fill="#dcdcdc" /><rect x="94" y="202.7" width="109" height="0.7" fill="#dcdcdc" /><rect x="52.75" y="90.75" width="168.00" height="11.50" fill="none" stroke="#e4fbfb" stroke-width="0.9" /><rect x="55.30" y="93.30" width="162.90" height="6.40" fill="none" stroke="#f0ffff" stroke-width="0.6" /><rect x="54.00" y="92.00" width="165.50" height="9.00" fill="none" stroke="#ff1010" stroke-width="2" /><rect x="-1" y="43.7" width="0.9" height="4.8" fill="#4b4f5c" opacity="0.75"/><rect x="-1" y="77.7" width="0.9" height="2.3" fill="#4b4f5c" opacity="0.75"/><rect x="-1" y="87" width="0.9" height="2.0" fill="#4b4f5c" opacity="0.75"/><rect x="-1" y="94" width="0.9" height="1.5" fill="#4b4f5c" opacity="0.75"/><rect x="-1" y="103.5" width="0.9" height="4.9" fill="#4b4f5c" opacity="0.75"/><rect x="229.2" y="14.5" width="1" height="1.5" fill="#23252c" opacity="0.8"/><rect x="229.2" y="68.7" width="1" height="2.3" fill="#23252c" opacity="0.8"/><rect x="229.2" y="77.4" width="1" height="2.0" fill="#23252c" opacity="0.8"/><rect x="229.2" y="87" width="1" height="1.7" fill="#23252c" opacity="0.8"/><rect x="229.2" y="93.5" width="1" height="2.0" fill="#23252c" opacity="0.8"/><rect x="229.2" y="102.6" width="1" height="2.2" fill="#23252c" opacity="0.8"/><rect x="229.2" y="111.3" width="1" height="1.7" fill="#23252c" opacity="0.8"/><rect x="229.2" y="117.7" width="1" height="2.3" fill="#23252c" opacity="0.8"/><path d="M74.2 93.4 L76 93.4 M75.1 93.4 L75.1 100 M74.2 100 L76 100" stroke="#222" stroke-width="0.5" fill="none"/></svg>
<svg style="left:685px;top:478px;overflow:hidden" width="242" height="225" viewBox="-2 0 242 225"><rect x="0.45" y="0.45" width="228.10" height="224.10" fill="#f0f0f0" stroke="#62adea" stroke-width="0.9" /><rect x="1" y="1" width="227" height="11" fill="#ffffff" /><text class="dt " x="1.8" y="7.91" font-size="5.3" textLength="14.3" lengthAdjust="spacing">Order</text><path d="M219.2 4.2 L224 9 M224 4.2 L219.2 9" fill="none" stroke="#222" stroke-width="0.7"/><rect x="4.65" y="19.35" width="218.80" height="184.60" fill="none" stroke="#dadada" stroke-width="0.7" /><text class="dt b" x="9" y="30.08" font-size="5.5" textLength="21.1" lengthAdjust="spacing">Product:</text><rect x="34.65" y="23.85" width="184.60" height="9.30" fill="#e1e1e1" stroke="#adadad" stroke-width="0.7" /><text class="dt " x="36.2" y="30.81" font-size="5.3" fill="#3a3a3a" textLength="21.7" lengthAdjust="spacing">MyMoney</text><path d="M213.6 27.8 L215.8 30 L218 27.8" fill="none" stroke="#444" stroke-width="0.6"/><text class="dt b" x="9" y="45.18" font-size="5.5" textLength="22.8" lengthAdjust="spacing">Quantity:</text><rect x="34.60" y="39.10" width="26.00" height="9.00" fill="#fff" stroke="#8e8e8e" stroke-width="0.6" /><text class="dt " x="36.2" y="44.81" font-size="5.3">2</text><rect x="53.6" y="39.4" width="6.7" height="8.4" fill="#dddddd" /><path d="M55.5 42.3 L57 40.8 L58.5 42.3 Z M55.5 44.5 L57 46.2 L58.5 44.5 Z" fill="#222"/><text class="dt b" x="65.6" y="45.18" font-size="5.5" textLength="37" lengthAdjust="spacing">. price per unit:</text><rect x="110.60" y="39.10" width="37.20" height="9.00" fill="#fff" stroke="#8e8e8e" stroke-width="0.6" /><text class="dt " x="111.8" y="45.01" font-size="5.3" textLength="11.3" lengthAdjust="spacing">$100</text><text class="dt b" x="153.3" y="45.18" font-size="5.5" textLength="25.6" lengthAdjust="spacing">. discount:</text><rect x="182.70" y="39.10" width="36.70" height="9.00" fill="#fff" stroke="#8e8e8e" stroke-width="0.6" /><text class="dt " x="183.8" y="45.01" font-size="5.3" fill="#666" textLength="6.4" lengthAdjust="spacing">0%</text><rect x="152.55" y="53.65" width="66.80" height="18.50" fill="none" stroke="#e0e0e0" stroke-width="0.7" /><text class="dt b" x="156.9" y="63.68" font-size="5.5" textLength="14.7" lengthAdjust="spacing">Total:</text><rect x="182.60" y="57.50" width="33.60" height="9.00" fill="#fff" stroke="#8e8e8e" stroke-width="0.6" /><text class="dt " x="183.7" y="64.01" font-size="5.3" textLength="8.2" lengthAdjust="spacing">200</text><text class="dt b" x="9" y="83.68" font-size="5.5" textLength="13.9" lengthAdjust="spacing">Date:</text><rect x="53.40" y="76.80" width="60.20" height="8.80" fill="#fff" stroke="#8e8e8e" stroke-width="0.6" /><text class="dt " x="55" y="82.61" font-size="5.3" textLength="26.9" lengthAdjust="spacing">12/12/2009</text><rect x="105.6" y="77.1" width="7.6" height="8.2" fill="#dddddd" /><path d="M108 80 L109.5 78.5 L111 80 Z M108 82.2 L109.5 83.9 L111 82.2 Z" fill="#222"/><text class="dt b" x="9" y="97.58" font-size="5.5" textLength="42" lengthAdjust="spacing">Customer Name:</text><rect x="53" y="91" width="167.5" height="11" fill="#fff" /><text class="dt " x="55" y="97.91" font-size="5.3" textLength="36" lengthAdjust="spacing">Samuel Clemens</text><text class="dt b" x="9" y="113.48" font-size="5.5" textLength="17.2" lengthAdjust="spacing">Street:</text><rect x="53.40" y="107.50" width="166.00" height="8.70" fill="#fff" stroke="#8e8e8e" stroke-width="0.6" /><text class="dt " x="55" y="113.91" font-size="5.3" textLength="29" lengthAdjust="spacing">3, Garden st.</text><text class="dt b" x="9" y="129.98" font-size="5.5" textLength="14.8" lengthAdjust="spacing">State:</text><rect x="53.40" y="122.50" width="166.00" height="8.70" fill="#fff" stroke="#8e8e8e" stroke-width="0.6" /><text class="dt " x="55" y="128.61" font-size="5.3" textLength="7" lengthAdjust="spacing">US</text><text class="dt b" x="9" y="144.48" font-size="5.5" textLength="14" lengthAdjust="spacing">Card:</text><circle cx="56.4" cy="142.50" r="2.9" fill="#fff" stroke="#333" stroke-width="0.6"/><text class="dt " x="61.6" y="144.31" font-size="5.3" textLength="10.1" lengthAdjust="spacing">Visa</text><circle cx="56.4" cy="153.85" r="2.9" fill="#fff" stroke="#333" stroke-width="0.6"/><circle cx="56.4" cy="153.85" r="1.5" fill="#222"/><text class="dt " x="61.6" y="155.96" font-size="5.3" textLength="27" lengthAdjust="spacing">MasterCard</text><circle cx="56.4" cy="165.20" r="2.9" fill="#fff" stroke="#333" stroke-width="0.6"/><text class="dt " x="61.6" y="166.91" font-size="5.3" textLength="42" lengthAdjust="spacing">American Express</text><text class="dt b" x="9" y="182.18" font-size="5.5" textLength="20.8" lengthAdjust="spacing">Card No</text><rect x="53.40" y="175.60" width="166.00" height="8.60" fill="#fff" stroke="#8e8e8e" stroke-width="0.6" /><text class="dt " x="55" y="182.01" font-size="5.3" textLength="32" lengthAdjust="spacing">123456789012</text><text class="dt b" x="9" y="197.08" font-size="5.5" textLength="39.9" lengthAdjust="spacing">Expiration Date:</text><rect x="53.40" y="190.60" width="60.20" height="8.60" fill="#fff" stroke="#8e8e8e" stroke-width="0.6" /><text class="dt " x="55" y="197.31" font-size="5.3" textLength="26.9" lengthAdjust="spacing">02/03/2012</text><rect x="146.35" y="209.85" width="36.70" height="9.20" fill="#e1e1e1" stroke="#adadad" stroke-width="0.7" /><text class="dt " x="160" y="215.81" font-size="5.3">OK</text><rect x="186.35" y="209.85" width="36.70" height="9.20" fill="#e1e1e1" stroke="#adadad" stroke-width="0.7" /><text class="dt " x="198" y="215.81" font-size="5.3" textLength="17" lengthAdjust="spacing">Cancel</text><rect x="204.8" y="99.5" width="1.1" height="128" fill="#8a8a8a" /><rect x="205.9" y="100" width="0.9" height="128" fill="#c4c4c8" /><rect x="79.95" y="97.35" width="124.70" height="132.30" fill="#f1f1f1" stroke="#c8c8c8" stroke-width="0.7" /><rect x="81.2" y="156.7" width="121.8" height="10.4" fill="#91c9f7" /><text class="dt m g" x="96.1" y="105.55" font-size="5.7" textLength="13.5" lengthAdjust="spacing">Undo</text><text class="dt m g" x="96.1" y="119.15" font-size="5.7" textLength="8.9" lengthAdjust="spacing">Cut</text><text class="dt m g" x="96.1" y="129.75" font-size="5.7" textLength="12.8" lengthAdjust="spacing">Copy</text><text class="dt m g" x="96.1" y="140.05" font-size="5.7" textLength="13.2" lengthAdjust="spacing">Paste</text><text class="dt m g" x="96.1" y="149.95" font-size="5.7" textLength="15.6" lengthAdjust="spacing">Delete</text><text class="dt m" x="96.1" y="177.75" font-size="5.7" textLength="65.8" lengthAdjust="spacing">Right to left Reading order</text><text class="dt m" x="96.1" y="188.15" font-size="5.7" textLength="82.2" lengthAdjust="spacing">Show Unicode control characters</text><text class="dt m" x="96.1" y="198.25" font-size="5.7" textLength="80" lengthAdjust="spacing">Insert Unicode control character</text><text class="dt m" x="96.1" y="212.25" font-size="5.7" textLength="24.6" lengthAdjust="spacing">Open IME</text><text class="dt m g" x="96.1" y="222.25" font-size="5.7" textLength="34.3" lengthAdjust="spacing">Reconversion</text><text class="dt m" x="96.1" y="163.85" font-size="5.7" fill="#000" textLength="22.7" lengthAdjust="spacing">Select All</text><path d="M197.4 195.3 L198.9 196.7 L197.4 198.1" fill="none" stroke="#333" stroke-width="0.6"/><rect x="94" y="109.7" width="109" height="0.7" fill="#dcdcdc" /><rect x="94" y="154.7" width="109" height="0.7" fill="#dcdcdc" /><rect x="94" y="170.39999999999998" width="109" height="0.7" fill="#dcdcdc" /><rect x="94" y="202.7" width="109" height="0.7" fill="#dcdcdc" /><rect x="52.75" y="90.75" width="168.00" height="11.50" fill="none" stroke="#e4fbfb" stroke-width="0.9" /><rect x="55.30" y="93.30" width="162.90" height="6.40" fill="none" stroke="#f0ffff" stroke-width="0.6" /><rect x="54.00" y="92.00" width="165.50" height="9.00" fill="none" stroke="#ff1010" stroke-width="2" /><rect x="-1" y="43.7" width="0.9" height="4.8" fill="#4b4f5c" opacity="0.75"/><rect x="-1" y="77.7" width="0.9" height="2.3" fill="#4b4f5c" opacity="0.75"/><rect x="-1" y="87" width="0.9" height="2.0" fill="#4b4f5c" opacity="0.75"/><rect x="-1" y="94" width="0.9" height="1.5" fill="#4b4f5c" opacity="0.75"/><rect x="-1" y="103.5" width="0.9" height="4.9" fill="#4b4f5c" opacity="0.75"/><rect x="229.2" y="14.5" width="1" height="1.5" fill="#23252c" opacity="0.8"/><rect x="229.2" y="68.7" width="1" height="2.3" fill="#23252c" opacity="0.8"/><rect x="229.2" y="77.4" width="1" height="2.0" fill="#23252c" opacity="0.8"/><rect x="229.2" y="87" width="1" height="1.7" fill="#23252c" opacity="0.8"/><rect x="229.2" y="93.5" width="1" height="2.0" fill="#23252c" opacity="0.8"/><rect x="229.2" y="102.6" width="1" height="2.2" fill="#23252c" opacity="0.8"/><rect x="229.2" y="111.3" width="1" height="1.7" fill="#23252c" opacity="0.8"/><rect x="229.2" y="117.7" width="1" height="2.3" fill="#23252c" opacity="0.8"/><path d="M74.2 93.4 L76 93.4 M75.1 93.4 L75.1 100 M74.2 100 L76 100" stroke="#222" stroke-width="0.5" fill="none"/></svg>
</body></html>
